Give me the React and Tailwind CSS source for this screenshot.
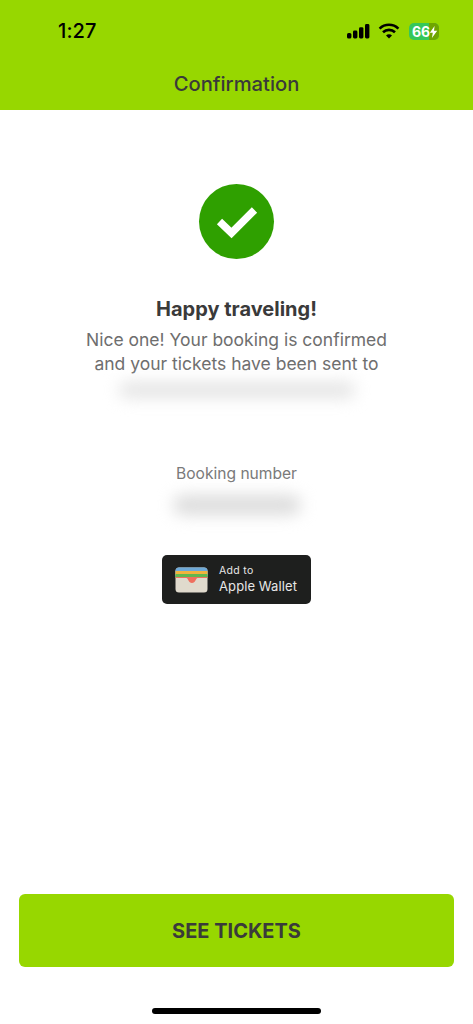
export default function App() {
  return (
    <div className="w-[473px] h-[1024px] bg-white flex flex-col font-['Inter','Liberation_Sans',sans-serif] overflow-hidden">
      <header className="h-[110px] shrink-0 bg-[#97d700] flex flex-col">
        <div className="h-[62px] flex items-center justify-between pl-[58px] pr-[34px]">
          <span className="text-[20px] leading-6 font-medium text-black tracking-[0.1px]">1:27</span>
          <div className="flex items-center gap-[5px]">
            <svg width="24" height="16" viewBox="0 0 24 16" fill="#000">
              <rect x="0" y="10" width="4.4" height="5.5" rx="1.6" />
              <rect x="6" y="7.500" width="4.400" height="8" rx="1.4" />
              <rect x="12" y="4.200" width="4.400" height="11.300" rx="1.4" />
              <rect x="18" y="1" width="4.400" height="14.500" rx="1.4" />
            </svg>
            <svg width="22" height="16" viewBox="0 0 22 16" fill="none" stroke="#000" strokeWidth="2.6" className="ml-[2px]">
              <path d="M1.6 5.6a13.5 13.5 0 0 1 18.8 0" />
              <path d="M5 9.3a8.7 8.7 0 0 1 12 0" />
              <path d="M11 15.4l-3-3a4.2 4.2 0 0 1 6 0z" fill="#000" stroke="none" />
            </svg>
            <div className="relative ml-[4px] w-[30px] h-[17px] rounded-[5px] bg-[#35c759] flex items-center pl-[3px]">
              <div className="absolute right-0 top-0 bottom-0 w-[10px] rounded-r-[5px] bg-[#6fa500]" />
              <span className="relative text-[14px] leading-[17px] font-bold text-white">66</span>
              <svg className="absolute right-[1px] top-[3px]" width="9" height="12" viewBox="0 0 9 12" fill="#fff">
                <path d="M5.6 0 0.8 6.8h3L2.9 12l5.3-7.2H5z" />
              </svg>
            </div>
          </div>
        </div>
        <div className="h-[44px] flex items-center justify-center">
          <h1 className="text-[20.200px] leading-6 font-medium text-[#3a3a3a]">Confirmation</h1>
        </div>
      </header>

      <main className="flex-1 flex flex-col items-center pt-[74px]">
        <div className="w-[75px] h-[75px] rounded-full bg-[#2fa000] flex items-center justify-center">
          <svg width="42" height="34" viewBox="0 0 42 34" fill="none" stroke="#fff" strokeWidth="7.5">
            <path d="M3.5 16.5 15.5 28 38.5 5" />
          </svg>
        </div>
        <h2 className="mt-[37px] text-[20px] leading-[26px] font-bold text-[#3a3a3a]">Happy traveling!</h2>
        <p className="mt-[6px] text-[17.5px] leading-6 text-[#6e6e6e] text-center">
          Nice one! Your booking is confirmed
          <br />
          and your tickets have been sent to
        </p>
        <div className="mt-[6px] w-[236px] h-[16px] bg-[#e4e4e4] rounded-full blur-[8px]" />
        <div className="mt-[65px] text-[15.600px] leading-[22px] text-[#7a7a7a]">Booking number</div>
        <div className="mt-[10px] w-[128px] h-[20px] bg-[#dcdcdc] rounded-full blur-[8px]" />
        <button className="mt-[40px] w-[149px] h-[49px] rounded-[5px] bg-[#1e1f1e] flex items-center pl-[13px] gap-[11px]">
          <svg width="33" height="26" viewBox="0 0 33 26">
            <rect x="0.5" y="0.5" width="32" height="25" rx="3.5" fill="#e0dacd" />
            <path d="M0.5 9V4a3.5 3.5 0 0 1 3.5-3.5h25A3.5 3.5 0 0 1 32.5 4v5z" fill="#6ea9d8" />
            <rect x="0.5" y="4" width="32" height="4" fill="#f2b33d" />
            <rect x="0.5" y="7" width="32" height="4" fill="#62b74e" />
            <path d="M0.5 10h32v1h-10c-1.500 0-2 5-5.500 5s-4-5-5.500-5H0.500z" fill="#ef6f5e" />
          </svg>
          <span className="flex flex-col items-start text-[#e6e6e6]">
            <span className="text-[10.500px] leading-[14px] tracking-[0.3px]">Add to</span>
            <span className="text-[13px] leading-[17px] tracking-[0.1px]">Apple Wallet</span>
          </span>
        </button>
      </main>

      <div className="shrink-0 px-[19px]">
        <button className="w-[435px] h-[73px] rounded-[6px] bg-[#97d700] text-[20px] font-bold text-[#3a3a3a] flex items-center justify-center">
          SEE TICKETS
        </button>
      </div>
      <div className="shrink-0 h-[57px] flex justify-center pt-[41px]">
        <div className="w-[169px] h-[6px] rounded-full bg-black" />
      </div>
    </div>
  );
}
